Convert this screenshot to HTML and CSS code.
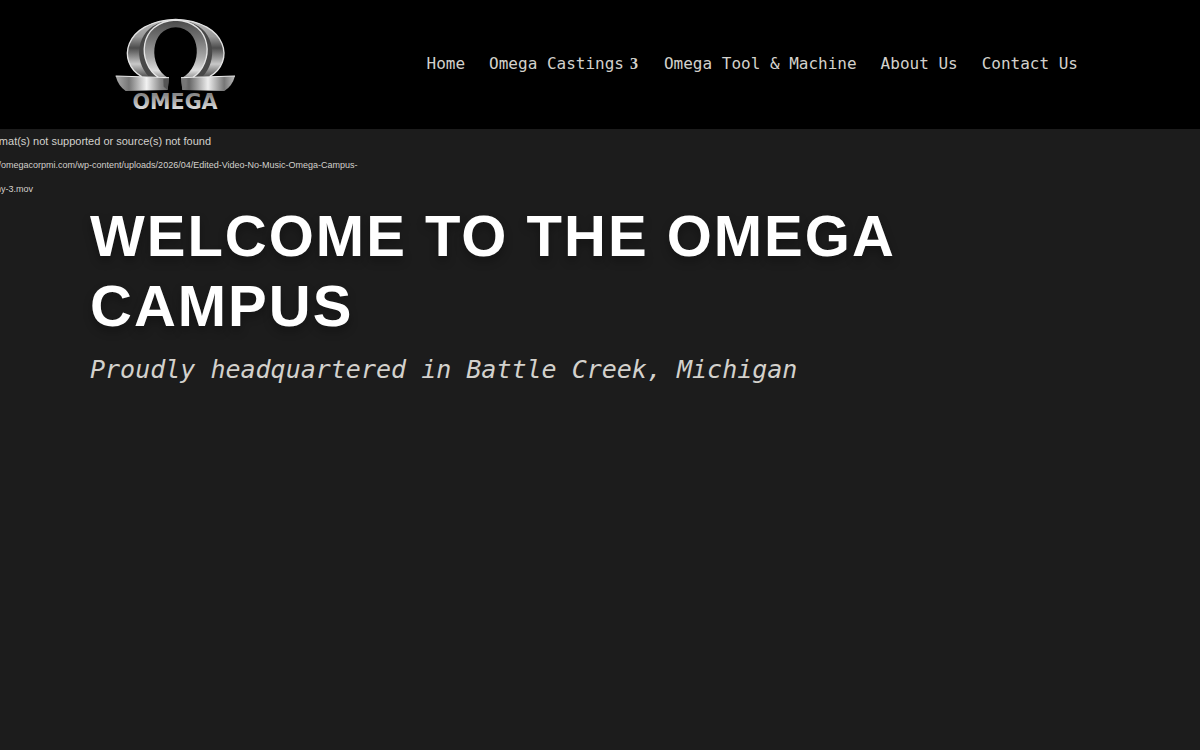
FILE: index.html
```html
<!DOCTYPE html>
<html lang="en">
<head>
  <meta charset="UTF-8">
  <meta name="viewport" content="width=device-width, initial-scale=1.0">
  <title>Omega Campus</title>
  <link rel="stylesheet" href="styles.css">
</head>
<body>
  <header class="header">
    <a class="logo" href="#" aria-label="Omega home">
      <svg class="logo-image" viewBox="30 24 360 276">
        <defs>
          <linearGradient id="back-metal" x1="0" y1="0" x2="0" y2="1">
            <stop offset="0" stop-color="#bbb"/>
            <stop offset="0.3" stop-color="#999"/>
            <stop offset="0.5" stop-color="#4c4c4c"/>
            <stop offset="0.78" stop-color="#c8c8c8"/>
            <stop offset="1" stop-color="#555"/>
          </linearGradient>
          <linearGradient id="front-metal" x1="0" y1="0" x2="0" y2="1">
            <stop offset="0" stop-color="#4a4a4a"/>
            <stop offset="0.35" stop-color="#777"/>
            <stop offset="0.65" stop-color="#a8a8a8"/>
            <stop offset="0.88" stop-color="#dcdcdc"/>
            <stop offset="1" stop-color="#999"/>
          </linearGradient>
          <linearGradient id="foot-left" x1="0" y1="0" x2="1" y2="0">
            <stop offset="0" stop-color="#aaa"/>
            <stop offset="0.25" stop-color="#777"/>
            <stop offset="0.58" stop-color="#f2f2f2"/>
            <stop offset="0.85" stop-color="#888"/>
            <stop offset="1" stop-color="#666"/>
          </linearGradient>
          <linearGradient id="foot-right" x1="0" y1="0" x2="1" y2="0">
            <stop offset="0" stop-color="#888"/>
            <stop offset="0.15" stop-color="#666"/>
            <stop offset="0.5" stop-color="#eee"/>
            <stop offset="0.8" stop-color="#777"/>
            <stop offset="1" stop-color="#bbb"/>
          </linearGradient>
          <linearGradient id="word-metal" x1="0" y1="0" x2="0" y2="1">
            <stop offset="0.2" stop-color="#888"/>
            <stop offset="0.8" stop-color="#ddd"/>
          </linearGradient>
        </defs>
        <!-- back ring -->
        <path d="M110 200C34 158 54 34 212 28C370 34 390 158 314 200Z" fill="url(#back-metal)"/>
        <path d="M132 200C86 155 90 62 170 36L254 36C334 62 338 155 292 200Z" fill="#484848"/>
        <path d="M110 200C34 158 54 34 212 28C370 34 390 158 314 200" fill="none" stroke="#e4e4e4" stroke-width="4"/>
        <!-- front ring -->
        <path d="M160 202C96 160 98 36 212 30C326 36 328 160 264 202Z" fill="url(#front-metal)"/>
        <path d="M160 202C96 160 98 36 212 30C326 36 328 160 264 202" fill="none" stroke="#e4e4e4" stroke-width="4"/>
        <path d="M190 204C128 170 134 54 212 52C290 54 296 170 230 204L230 210L190 210Z" fill="#000"/>
        <!-- feet -->
        <path d="M32 198L192 203L188 240L62 243Q40 228 32 198Z" fill="url(#foot-left)"/>
        <path d="M175 208L192 203L188 240L176 230Z" fill="#555"/>
        <path d="M390 198L228 203L232 240L358 243Q382 228 390 198Z" fill="url(#foot-right)"/>
        <path d="M245 208L228 203L232 240L244 230Z" fill="#777"/>
        <path d="M32 198L192 203M390 198L228 203" stroke="#eee" stroke-width="3"/>
        <text class="logo-text" x="210" y="297" text-anchor="middle">OMEGA</text>
      </svg>
    </a>
    <nav class="nav">
      <a href="#">Home</a>
      <a class="has-menu" href="#">Omega Castings</a>
      <a href="#">Omega Tool &amp; Machine</a>
      <a href="#">About Us</a>
      <a href="#">Contact Us</a>
    </nav>
  </header>

  <main class="hero">
    <div class="video-error">
      <p>Media error: Format(s) not supported or source(s) not found</p>
      <a href="#">Download File: https://omegacorpmi.com/wp-content/uploads/2026/04/Edited-Video-No-Music-Omega-Campus-Drone-Cinematography-3.mov</a>
    </div>
    <div class="hero-content">
      <h1>Welcome to the Omega Campus</h1>
      <p class="tagline">Proudly headquartered in Battle Creek, Michigan</p>
    </div>
  </main>
</body>
</html>
```
FILE: styles.css
```css
body {
  margin: 0;
  min-height: 100vh;
  display: flex;
  flex-direction: column;
  background-color: #1c1c1c;
  color: #d3d1cc;
  font-family: "Liberation Sans", Arial, sans-serif;
}
a {
  color: inherit;
  text-decoration: none;
}

/* Header */
.header {
  display: flex;
  justify-content: space-between;
  align-items: center;
  padding: 18px 122px 19px 115px;
  background-color: #000;
}
.logo-image {
  display: block;
  width: 120px;
  overflow: visible;
}
.logo-text {
  font-family: "DejaVu Sans", sans-serif;
  font-size: 62px;
  font-weight: bold;
  fill: url(#word-metal);
}
.nav {
  display: flex;
  gap: 24px;
  font-family: "DejaVu Sans Mono", monospace;
  font-size: 16px;
  line-height: 20px;
}
.has-menu::after {
  content: "3";
  margin-left: 6px;
  padding-right: 2px;
  font-family: "Liberation Serif", serif;
  font-weight: bold;
}

/* Hero */
.hero {
  flex: 1;
  overflow: hidden;
}
.video-error {
  max-width: 450px;
  margin-left: -88px;
  font-size: 9px;
  line-height: 24px;
}
.video-error p {
  margin: 0;
  padding: 0 8px;
  font-size: 11px;
}
.hero-content {
  padding: 0 90px;
}
h1 {
  margin: 0;
  color: #fff;
  font-size: 58px;
  line-height: 70px;
  letter-spacing: 2px;
  text-transform: uppercase;
  text-shadow: 0 5px 10px rgba(0, 0, 0, 0.3);
}
.tagline {
  margin: 12px 0;
  font-family: "DejaVu Sans Mono", monospace;
  font-size: 25px;
  font-style: italic;
  line-height: 34px;
}
```
